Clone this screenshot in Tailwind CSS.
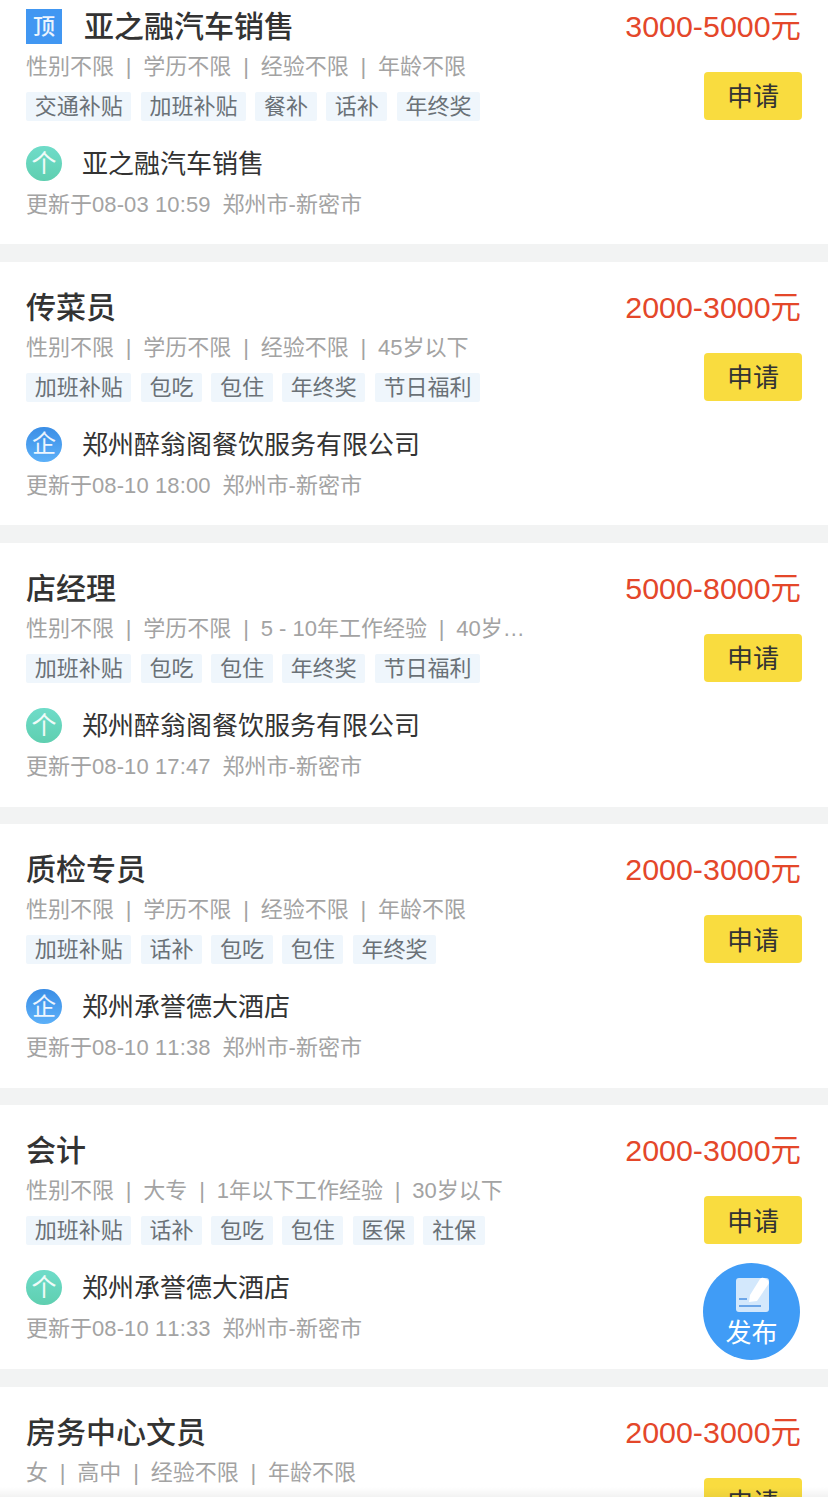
<!DOCTYPE html>
<html lang="zh-CN">
<head>
    <meta charset="UTF-8">
    <meta name="viewport" content="width=device-width, initial-scale=1.0">
    <title>职位列表</title>
    <script src="https://cdn.jsdelivr.net/npm/@tailwindcss/browser@4"></script>
</head>
<body class="bg-[#f2f3f3] font-['Liberation_Sans','Noto_Sans_CJK_SC',sans-serif] [font-kerning:none]">
    <div class="relative h-[1497px] overflow-hidden">
        <!-- Job list -->
        <main id="jobs" class="-mt-[19.45px] flex flex-col gap-[17.6px]"></main>

        <!-- Publish button -->
        <button class="absolute left-[703px] top-[1263px] w-[97px] h-[97px] rounded-full bg-[#409cf6] flex flex-col items-center text-white">
            <svg class="mt-[12px] ml-[4px]" width="36" height="38" viewBox="0 0 36 38">
                <rect x="0" y="3" width="33" height="34" rx="3" fill="#d3e8fc"/>
                <path d="M13 27 L14 20 L24 4 Q25.500 2 28 3 L31.500 5 Q33.500 6.500 32.500 9 L21 26 Z" fill="#fff"/>
                <path d="M3 24 H11" stroke="#4a90e2" stroke-width="1.500"/>
                <path d="M3 31 H25" stroke="#4a90e2" stroke-width="1.500"/>
            </svg>
            <span class="text-[26px] leading-[30px] mt-[5px]">发布</span>
        </button>

        <!-- Bottom fade -->
        <div class="absolute left-0 right-0 bottom-0 h-[10px] bg-gradient-to-b from-transparent to-black/5"></div>
    </div>

    <script>
        // Job data
        const jobs = [
            { title: '亚之融汽车销售', top: true, salary: '3000-5000元', meta: ['性别不限', '学历不限', '经验不限', '年龄不限'], tags: ['交通补贴', '加班补贴', '餐补', '话补', '年终奖'], icon: 'ge', company: '亚之融汽车销售', time: '08-03 10:59' },
            { title: '传菜员', salary: '2000-3000元', meta: ['性别不限', '学历不限', '经验不限', '45岁以下'], tags: ['加班补贴', '包吃', '包住', '年终奖', '节日福利'], icon: 'qi', company: '郑州醉翁阁餐饮服务有限公司', time: '08-10 18:00' },
            { title: '店经理', salary: '5000-8000元', meta: ['性别不限', '学历不限', '5 - 10年工作经验', '40岁以下'], tags: ['加班补贴', '包吃', '包住', '年终奖', '节日福利'], icon: 'ge', company: '郑州醉翁阁餐饮服务有限公司', time: '08-10 17:47' },
            { title: '质检专员', salary: '2000-3000元', meta: ['性别不限', '学历不限', '经验不限', '年龄不限'], tags: ['加班补贴', '话补', '包吃', '包住', '年终奖'], icon: 'qi', company: '郑州承誉德大酒店', time: '08-10 11:38' },
            { title: '会计', salary: '2000-3000元', meta: ['性别不限', '大专', '1年以下工作经验', '30岁以下'], tags: ['加班补贴', '话补', '包吃', '包住', '医保', '社保'], icon: 'ge', company: '郑州承誉德大酒店', time: '08-10 11:33' },
            { title: '房务中心文员', salary: '2000-3000元', meta: ['女', '高中', '经验不限', '年龄不限'], tags: ['加班补贴'], icon: 'ge', company: '郑州承誉德大酒店', time: '08-10 11:30' }
        ];

        const icons = {
            ge: '<div class="w-[36px] h-[35px] -mt-[2px] rounded-full bg-gradient-to-b from-[#6fdcc9] to-[#5fcfb0] flex items-center justify-center text-white/90 text-[25px] leading-none">个</div>',
            qi: '<div class="w-[36px] h-[35px] -mt-[2px] rounded-full bg-gradient-to-b from-[#3b8ee6] to-[#5cb0f8] flex items-center justify-center text-white/90 text-[24px] leading-none">企</div>'
        };

        function renderJob(job) {
            const badge = job.top
                ? '<span class="w-[36px] h-[35px] mr-[22px] bg-[#4197f2] text-white/90 text-[22px] flex items-center justify-center shrink-0">顶</span>'
                : '';
            const meta = job.meta.join('<span class="mx-[11.8px]">|</span>');
            const tags = job.tags.map(t => `<span class="h-[29px] px-[8.7px] bg-[#eff6fc] text-[#6a7177] text-[22px] leading-[29px] rounded-[2px]">${t}</span>`).join('');
            return `
                <article class="h-[263.6px] bg-white px-[26px] pt-[28px] flex justify-between">
                    <div class="w-[500px]">
                        <h2 class="flex items-center h-[36px] text-[30px] leading-[36px] font-medium text-[#333]">${badge}${job.title}</h2>
                        <p class="mt-[7px] text-[22px] leading-[30px] text-[#a3a3a3] truncate">${meta}</p>
                        <div class="mt-[10px] flex gap-[9.3px]">${tags}</div>
                        <div class="mt-[26px] flex items-center gap-[20px] h-[35px]">
                            ${icons[job.icon]}
                            <span class="text-[26px] text-[#333]">${job.company}</span>
                        </div>
                        <p class="mt-[8px] text-[22px] leading-[30px] text-[#a3a3a3] whitespace-nowrap">更新于<span class="tracking-[0.1px]">${job.time}</span><span class="ml-[12px]">郑州市-新密市</span></p>
                    </div>
                    <div class="flex flex-col items-end">
                        <span class="-mt-[1px] text-[30.4px] leading-[36px] text-[#e4472a] mr-[1px] whitespace-nowrap">${job.salary}</span>
                        <button class="mt-[28px] w-[98px] h-[48px] pt-[4px] rounded-[4px] bg-[#f9dc3f] text-[26px] text-[#333]">申请</button>
                    </div>
                </article>`;
        }

        document.getElementById('jobs').innerHTML = jobs.map(renderJob).join('');
    </script>
</body>
</html>
